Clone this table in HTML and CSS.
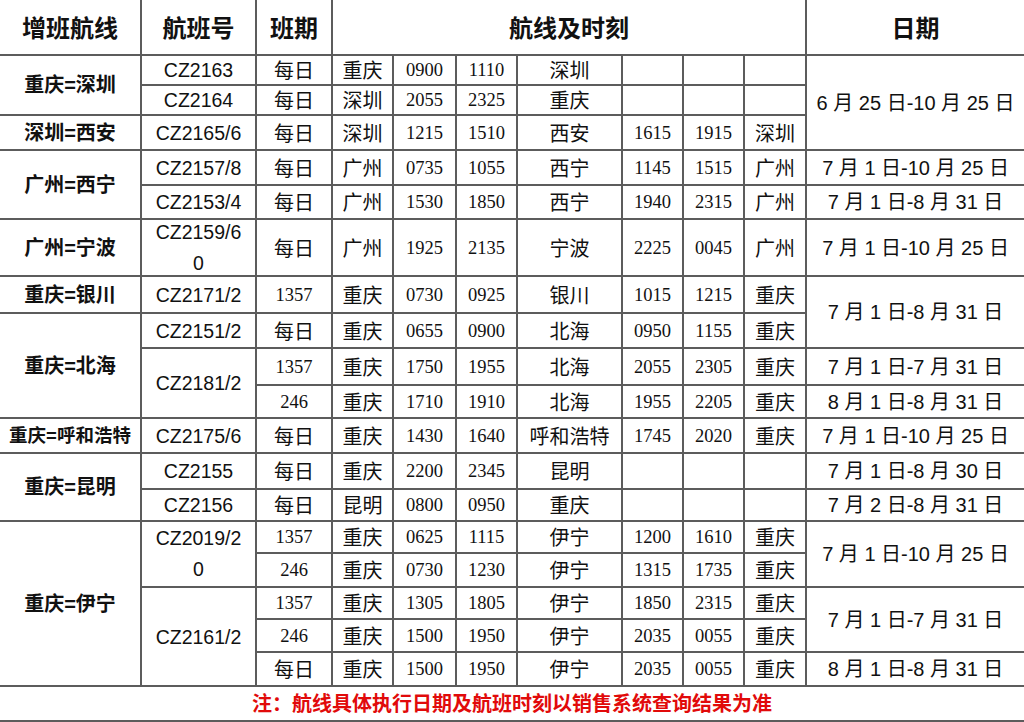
FILE: index.html
```html
<!DOCTYPE html>
<html lang="zh-CN">
<head>
<meta charset="utf-8">
<title>增班航线</title>
<link rel="stylesheet" href="styles.css">
</head>
<body>
<table class="sched">
  <colgroup>
    <col class="w-route"><col class="w-flt"><col class="w-days"><col class="w-city"><col class="w-t"><col class="w-t2"><col class="w-dest"><col class="w-t2"><col class="w-t2"><col class="w-back"><col class="w-date">
  </colgroup>
  <thead>
    <tr class="h55">
      <th class="c0">增班航线</th>
      <th>航班号</th>
      <th>班期</th>
      <th colspan="7">航线及时刻</th>
      <th class="last">日期</th>
    </tr>
  </thead>
  <tbody>
    <tr class="h30">
      <td class="c0 rt" rowspan="2">重庆=深圳</td>
      <td class="fl">CZ2163</td><td class="cn">每日</td><td class="cn">重庆</td><td class="nm">0900</td><td class="nm">1110</td><td class="cn">深圳</td><td></td><td></td><td></td>
      <td class="dt" rowspan="3">6 月 25 日-10 月 25 日</td>
    </tr>
    <tr class="h30">
      <td class="fl">CZ2164</td><td class="cn">每日</td><td class="cn">深圳</td><td class="nm">2055</td><td class="nm">2325</td><td class="cn">重庆</td><td></td><td></td><td></td>
    </tr>
    <tr class="h35">
      <td class="c0 rt">深圳=西安</td>
      <td class="fl">CZ2165/6</td><td class="cn">每日</td><td class="cn">深圳</td><td class="nm">1215</td><td class="nm">1510</td><td class="cn">西安</td><td class="nm">1615</td><td class="nm">1915</td><td class="cn">深圳</td>
    </tr>
    <tr class="h35">
      <td class="c0 rt" rowspan="2">广州=西宁</td>
      <td class="fl">CZ2157/8</td><td class="cn">每日</td><td class="cn">广州</td><td class="nm">0735</td><td class="nm">1055</td><td class="cn">西宁</td><td class="nm">1145</td><td class="nm">1515</td><td class="cn">广州</td>
      <td class="dt">7 月 1 日-10 月 25 日</td>
    </tr>
    <tr class="h34">
      <td class="fl">CZ2153/4</td><td class="cn">每日</td><td class="cn">广州</td><td class="nm">1530</td><td class="nm">1850</td><td class="cn">西宁</td><td class="nm">1940</td><td class="nm">2315</td><td class="cn">广州</td>
      <td class="dt">7 月 1 日-8 月 31 日</td>
    </tr>
    <tr class="h57">
      <td class="c0 rt">广州=宁波</td>
      <td class="fl"><span class="two">CZ2159/6<br>0</span></td><td class="cn">每日</td><td class="cn">广州</td><td class="nm">1925</td><td class="nm">2135</td><td class="cn">宁波</td><td class="nm">2225</td><td class="nm">0045</td><td class="cn">广州</td>
      <td class="dt">7 月 1 日-10 月 25 日</td>
    </tr>
    <tr class="h37">
      <td class="c0 rt">重庆=银川</td>
      <td class="fl">CZ2171/2</td><td class="nm">1357</td><td class="cn">重庆</td><td class="nm">0730</td><td class="nm">0925</td><td class="cn">银川</td><td class="nm">1015</td><td class="nm">1215</td><td class="cn">重庆</td>
      <td class="dt" rowspan="2">7 月 1 日-8 月 31 日</td>
    </tr>
    <tr class="h35">
      <td class="c0 rt" rowspan="3">重庆=北海</td>
      <td class="fl">CZ2151/2</td><td class="cn">每日</td><td class="cn">重庆</td><td class="nm">0655</td><td class="nm">0900</td><td class="cn">北海</td><td class="nm">0950</td><td class="nm">1155</td><td class="cn">重庆</td>
    </tr>
    <tr class="h37">
      <td class="fl" rowspan="2">CZ2181/2</td>
      <td class="nm">1357</td><td class="cn">重庆</td><td class="nm">1750</td><td class="nm">1955</td><td class="cn">北海</td><td class="nm">2055</td><td class="nm">2305</td><td class="cn">重庆</td>
      <td class="dt">7 月 1 日-7 月 31 日</td>
    </tr>
    <tr class="h33">
      <td class="nm">246</td><td class="cn">重庆</td><td class="nm">1710</td><td class="nm">1910</td><td class="cn">北海</td><td class="nm">1955</td><td class="nm">2205</td><td class="cn">重庆</td>
      <td class="dt">8 月 1 日-8 月 31 日</td>
    </tr>
    <tr class="h35">
      <td class="c0 rt sm">重庆=呼和浩特</td>
      <td class="fl">CZ2175/6</td><td class="cn">每日</td><td class="cn">重庆</td><td class="nm">1430</td><td class="nm">1640</td><td class="cn">呼和浩特</td><td class="nm">1745</td><td class="nm">2020</td><td class="cn">重庆</td>
      <td class="dt">7 月 1 日-10 月 25 日</td>
    </tr>
    <tr class="h36">
      <td class="c0 rt" rowspan="2">重庆=昆明</td>
      <td class="fl">CZ2155</td><td class="cn">每日</td><td class="cn">重庆</td><td class="nm">2200</td><td class="nm">2345</td><td class="cn">昆明</td><td></td><td></td><td></td>
      <td class="dt">7 月 1 日-8 月 30 日</td>
    </tr>
    <tr class="h32">
      <td class="fl">CZ2156</td><td class="cn">每日</td><td class="cn">昆明</td><td class="nm">0800</td><td class="nm">0950</td><td class="cn">重庆</td><td></td><td></td><td></td>
      <td class="dt">7 月 2 日-8 月 31 日</td>
    </tr>
    <tr class="h32">
      <td class="c0 rt" rowspan="5">重庆=伊宁</td>
      <td class="fl" rowspan="2"><span class="two">CZ2019/2<br>0</span></td>
      <td class="nm">1357</td><td class="cn">重庆</td><td class="nm">0625</td><td class="nm">1115</td><td class="cn">伊宁</td><td class="nm">1200</td><td class="nm">1610</td><td class="cn">重庆</td>
      <td class="dt" rowspan="2">7 月 1 日-10 月 25 日</td>
    </tr>
    <tr class="h34">
      <td class="nm">246</td><td class="cn">重庆</td><td class="nm">0730</td><td class="nm">1230</td><td class="cn">伊宁</td><td class="nm">1315</td><td class="nm">1735</td><td class="cn">重庆</td>
    </tr>
    <tr class="h32">
      <td class="fl" rowspan="3">CZ2161/2</td>
      <td class="nm">1357</td><td class="cn">重庆</td><td class="nm">1305</td><td class="nm">1805</td><td class="cn">伊宁</td><td class="nm">1850</td><td class="nm">2315</td><td class="cn">重庆</td>
      <td class="dt" rowspan="2">7 月 1 日-7 月 31 日</td>
    </tr>
    <tr class="h33">
      <td class="nm">246</td><td class="cn">重庆</td><td class="nm">1500</td><td class="nm">1950</td><td class="cn">伊宁</td><td class="nm">2035</td><td class="nm">0055</td><td class="cn">重庆</td>
    </tr>
    <tr class="h34">
      <td class="cn">每日</td><td class="cn">重庆</td><td class="nm">1500</td><td class="nm">1950</td><td class="cn">伊宁</td><td class="nm">2035</td><td class="nm">0055</td><td class="cn">重庆</td>
      <td class="dt">8 月 1 日-8 月 31 日</td>
    </tr>
  </tbody>
  <tfoot>
    <tr class="h35">
      <td class="c0 last note" colspan="11">注：航线具体执行日期及航班时刻以销售系统查询结果为准</td>
    </tr>
  </tfoot>
</table>
</body>
</html>
```

FILE: styles.css
```css
html, body {
  margin: 0;
  padding: 0;
  background: #ffffff;
}

body {
  width: 1024px;
  height: 722px;
  overflow: hidden;
  color: #111111;
  font-family: "Liberation Sans", "Noto Sans CJK SC", sans-serif;
}

.sched {
  width: 1024px;
  border-collapse: collapse;
  table-layout: fixed;
}

.w-route { width: 141px; }
.w-flt { width: 115px; }
.w-days { width: 76px; }
.w-city { width: 61px; }
.w-t { width: 63px; }
.w-t2 { width: 61px; }
.w-dest { width: 105px; }
.w-back { width: 62px; }
.w-date { width: 218px; }

.sched th,
.sched td {
  border: 2px solid #5c5c5c;
  padding: 0;
  text-align: center;
  vertical-align: middle;
  line-height: 24px;
  font-size: 20px;
  font-weight: normal;
  white-space: nowrap;
  overflow: hidden;
}

.sched thead th {
  border-top: none;
  font-size: 24px;
  font-weight: bold;
  font-family: "Noto Sans CJK SC", "Liberation Sans", sans-serif;
}

.sched .c0 { border-left: none; }
.sched .dt,
.sched .last { border-right: none; }

.h30 { height: 30px; }
.h32 { height: 32px; }
.h33 { height: 33px; }
.h34 { height: 34px; }
.h35 { height: 35px; }
.h36 { height: 36px; }
.h37 { height: 37px; }
.h55 { height: 55px; }
.h57 { height: 57px; }

.sched .rt {
  font-weight: bold;
  font-size: 20px;
}

.sched .rt.sm {
  font-size: 18.5px;
}

.sched .fl {
  font-size: 19.5px;
}

.two {
  display: block;
  line-height: 31px;
  margin: -4px 0;
}

.sched .cn {
  font-family: "Noto Sans CJK SC", "Liberation Sans", sans-serif;
  font-size: 20px;
}

.sched .nm {
  font-family: "Liberation Serif", "Noto Sans CJK SC", serif;
  font-size: 18.5px;
}

.sched .dt {
  font-size: 20px;
}

.sched .note {
  color: #e10a0a;
  font-weight: bold;
  font-size: 20px;
  font-family: "Liberation Sans", "Noto Sans CJK SC", sans-serif;
}
```
